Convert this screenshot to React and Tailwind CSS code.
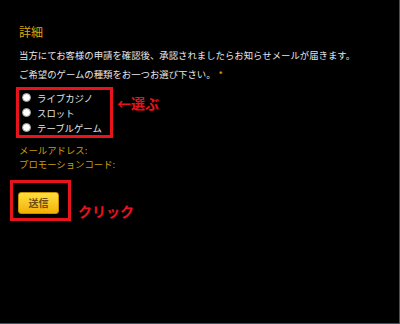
import React from "react";

const jp = { fontFamily: '"Noto Sans CJK JP", "Noto Sans", sans-serif' };

function Radio({ label }) {
  return (
    <label className="flex items-center h-[15px]">
      <span className="ml-[3px] w-[9px] h-[9px] rounded-full bg-white border border-[#9a9a9a]" />
      <span className="ml-[6px] text-[9.4px] leading-[12px] text-[#e6e6e6]">{label}</span>
    </label>
  );
}

export default function App() {
  const games = ["ライブカジノ", "スロット", "テーブルゲーム"];

  return (
    <div style={jp} className="w-[400px] h-[324px] bg-black border-r border-b border-[#236262] overflow-hidden">
      <div className="pl-[19px] pt-[25px]">
        <h2 className="text-[12px] leading-[14px] text-[#d9a90c]">詳細</h2>
        <p className="mt-[10px] text-[9.4px] leading-[12px] text-[#e6e6e6] whitespace-nowrap">
          当方にてお客様の申請を確認後、承認されましたらお知らせメールが届きます。
        </p>
        <p className="mt-[7px] text-[9.4px] leading-[12px] text-[#e6e6e6] whitespace-nowrap">
          ご希望のゲームの種類をお一つお選び下さい。
          <span className="ml-[3px] text-[#f0a000]">*</span>
        </p>

        {/* radio group */}
        <div className="flex items-start mt-[7px] -ml-[3px]">
          <div className="w-[97px] border-[3px] border-[#e8141c]">
            {games.map(g => (
              <Radio key={g} label={g} />
            ))}
          </div>
          <span className="ml-[4px] mt-[8px] text-[14px] leading-[16px] font-bold text-[#e8141c]">←選ぶ</span>
        </div>

        <div className="mt-[6px] flex flex-col gap-[0px] text-[9.4px] leading-[13.7px] text-[#c99d0e]">
          <p>メールアドレス:</p>
          <p>プロモーションコード:</p>
        </div>

        {/* submit */}
        <div className="flex items-start mt-[9px] -ml-[9px]">
          <div className="w-[61px] h-[41px] border-[3px] border-[#e8141c] pl-[5px] pt-[5px]">
            <button className="w-[41px] h-[22px] rounded-[3px] border border-[#c98f00] bg-gradient-to-b from-[#ffe03a] to-[#f3b000] text-[10px] leading-[12px] font-bold text-[#6b4d12]">
              送信
            </button>
          </div>
          <span className="ml-[7px] mt-[23px] text-[14px] leading-[16px] font-bold text-[#e8141c]">クリック</span>
        </div>
      </div>
    </div>
  );
}
